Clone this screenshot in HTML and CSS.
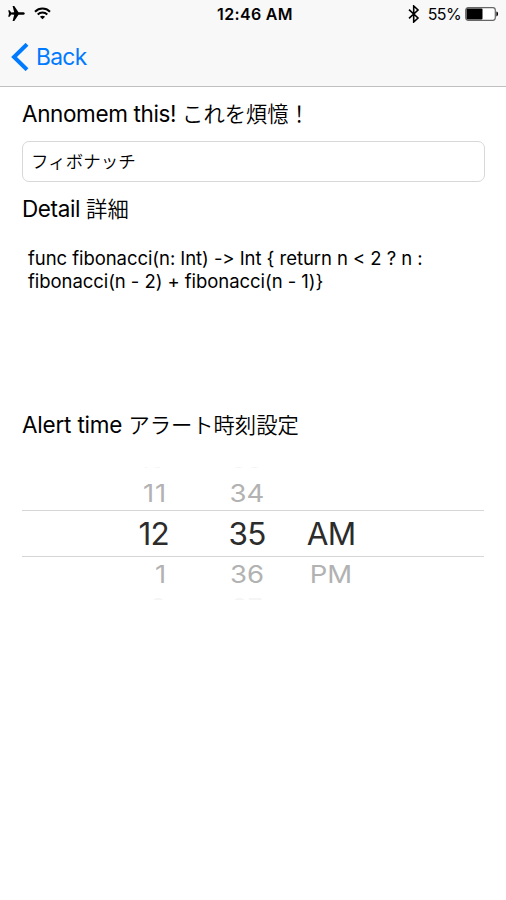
FILE: index.html
```html
<!DOCTYPE html>
<html lang="ja">
<head>
    <meta charset="UTF-8">
    <meta name="viewport" content="width=device-width, initial-scale=1.0">
    <title>Annomem</title>
    <link rel="stylesheet" href="styles.css">
</head>
<body>
    <header class="top">
        <!-- Status bar -->
        <div class="status-bar">
            <div class="status-left">
                <svg class="plane" width="17" height="15" viewBox="0 0 17 15">
                    <path d="M16.8 7.5C16.8 6.6 15.8 6.2 14.6 6.2H10.5L6.3 0H4.6L6.2 6.2L3.2 6.4L1.6 4.3H0.2L1 7.5L0.2 10.7H1.6L3.2 8.6L6.2 8.8L4.6 15H6.3L10.5 8.8H14.6C15.8 8.8 16.8 8.4 16.8 7.5Z"/>
                </svg>
                <svg width="17" height="13" viewBox="0 0 17 13">
                    <path d="M1 4.7C5.2 0.5 11.8 0.5 16 4.7" fill="none" stroke="#000" stroke-width="2"/>
                    <path d="M3.7 7.5C6.4 4.9 10.6 4.9 13.3 7.5" fill="none" stroke="#000" stroke-width="2"/>
                    <path d="M5.9 9.7C7.4 8.3 9.6 8.3 11.1 9.7L8.5 12.3Z"/>
                </svg>
            </div>
            <div class="status-time">12:46 AM</div>
            <div class="status-right">
                <svg class="bluetooth" width="12" height="18" viewBox="0 0 12 18">
                    <path d="M1 4.7L10 13L5.7 17V1L10 5L1 13.3" fill="none" stroke="#000" stroke-width="1.6"/>
                </svg>
                <span class="percent">55%</span>
                <svg width="34" height="14" viewBox="0 0 34 14">
                    <rect x="0.7" y="0.7" width="29.6" height="12.6" rx="2.5" fill="#fff" stroke="#666" stroke-width="1.2"/>
                    <rect x="1.5" y="1.5" width="16" height="11" rx="1"/>
                    <path d="M31.4 4.6C33.6 5 33.6 9 31.4 9.4Z"/>
                </svg>
            </div>
        </div>

        <!-- Navigation bar -->
        <a href="#" class="back">
            <svg width="18" height="28" viewBox="0 0 18 28">
                <path d="M16 1.3L3 14L16 26.7" fill="none" stroke="#007aff" stroke-width="4"/>
            </svg>
            <span>Back</span>
        </a>
    </header>

    <main class="content">
        <label class="title title-name" for="name">Annomem this! <span class="jp">これを煩憶！</span></label>
        <input class="name" id="name" type="text" value="フィボナッチ">

        <div class="title title-detail">Detail <span class="jp">詳細</span></div>
        <div class="detail">
            <div class="detail-one">func fibonacci(n: Int) -&gt; Int { return n &lt; 2 ? n :</div>
            <div class="detail-two">fibonacci(n - 2) + fibonacci(n - 1)}</div>
        </div>

        <div class="title title-alert">Alert time <span class="jp">アラート時刻設定</span></div>
        <div class="picker">
            <div class="row edge edge-top">
                <span class="hour">10</span><span class="minute">33</span><span class="period"></span>
            </div>
            <div class="row near near-top">
                <span class="hour">11</span><span class="minute">34</span><span class="period"></span>
            </div>
            <div class="row selected">
                <span class="hour">12</span><span class="minute">35</span><span class="period">AM</span>
            </div>
            <div class="row near near-bottom">
                <span class="hour">1</span><span class="minute">36</span><span class="period">PM</span>
            </div>
            <div class="row edge edge-bottom">
                <span class="hour">2</span><span class="minute">37</span><span class="period"></span>
            </div>
        </div>
    </main>
</body>
</html>
```

FILE: styles.css
```css
body {
    margin: 0;
    min-height: 900px;
    background-color: #fff;
    color: #000;
    font-family: Inter, "Noto Sans CJK JP", sans-serif;
}

/* Status and navigation */
.top {
    height: 86px;
    background-color: #f8f8f8;
    border-bottom: 1px solid #c0c0c0;
}
.status-bar {
    display: grid;
    grid-template-columns: 1fr auto 1fr;
    align-items: center;
    height: 27px;
    padding: 0 7px 0 8px;
}
.status-left {
    display: flex;
    align-items: center;
    gap: 9px;
}
.status-time {
    padding-left: 3px;
    font-size: 16px;
    font-weight: 600;
    letter-spacing: 0.35px;
}
.status-right {
    display: flex;
    align-items: center;
    justify-content: flex-end;
}
.percent {
    font-size: 16px;
    letter-spacing: -0.6px;
    margin: 0 4px 0 8px;
}
.back {
    display: flex;
    align-items: center;
    gap: 8px;
    width: 100px;
    height: 59px;
    padding-left: 11px;
    color: #007aff;
    font-size: 22.8px;
    letter-spacing: -0.7px;
    text-decoration: none;
}
.back span {
    margin-left: -1px;
}

/* Form */
.content {
    display: flex;
    flex-direction: column;
    padding: 0 22px;
}
.title {
    height: 30px;
    line-height: 30px;
    font-size: 22.5px;
    letter-spacing: -0.37px;
    white-space: nowrap;
}
.jp {
    font-family: "Noto Sans CJK JP", sans-serif;
    font-size: 21.3px;
    font-weight: 350;
    letter-spacing: 0;
}
.title-name {
    margin-top: 11px;
}
.name {
    box-sizing: border-box;
    width: 463px;
    height: 41px;
    margin-top: 13px;
    padding: 0 9px 2px 8px;
    border: 1px solid #d8d8d8;
    border-radius: 7px;
    background-color: #fff;
    color: #000;
    font-family: "Noto Sans CJK JP", sans-serif;
    font-size: 17.5px;
    font-weight: 350;
}
.title-detail {
    margin-top: 11px;
}
.detail {
    height: 164px;
    margin-top: 24px;
    padding-left: 6px;
    font-size: 18.5px;
    line-height: 23px;
    letter-spacing: -0.06px;
    white-space: nowrap;
}
.title-alert {
    margin-top: -2px;
    letter-spacing: -0.2px;
}

/* Time picker */
.picker {
    margin-top: 28px;
}
.row {
    display: flex;
    align-items: center;
    overflow: hidden;
}
.row span {
    display: inline-block;
}
.hour {
    width: 147px;
    text-align: right;
}
.minute {
    width: 60px;
    margin-left: 48px;
    text-align: center;
}
.period {
    width: 60px;
    margin-left: 24px;
    text-align: center;
}
.selected {
    height: 45px;
    border-top: 1px solid #d6d6d6;
    border-bottom: 1px solid #d6d6d6;
    color: #2c2c2c;
    font-size: 31.5px;
    letter-spacing: -0.8px;
}
.near {
    height: 41px;
    color: #b2b2b2;
    font-size: 27.5px;
}
.near span {
    transform: scaleY(0.87);
}
.near .hour {
    width: 145px;
    margin-right: 2px;
    letter-spacing: 0.8px;
}
.near-top {
    box-sizing: border-box;
    padding-top: 6px;
}
.near-bottom {
    box-sizing: border-box;
    padding-bottom: 7px;
}
.edge {
    height: 2px;
    color: #f5f5f5;
    font-size: 26px;
    line-height: 20px;
}
.edge .hour {
    width: 144px;
    margin-right: 3px;
}
.edge-top {
    align-items: flex-end;
}
.edge-bottom {
    align-items: flex-start;
}
```
